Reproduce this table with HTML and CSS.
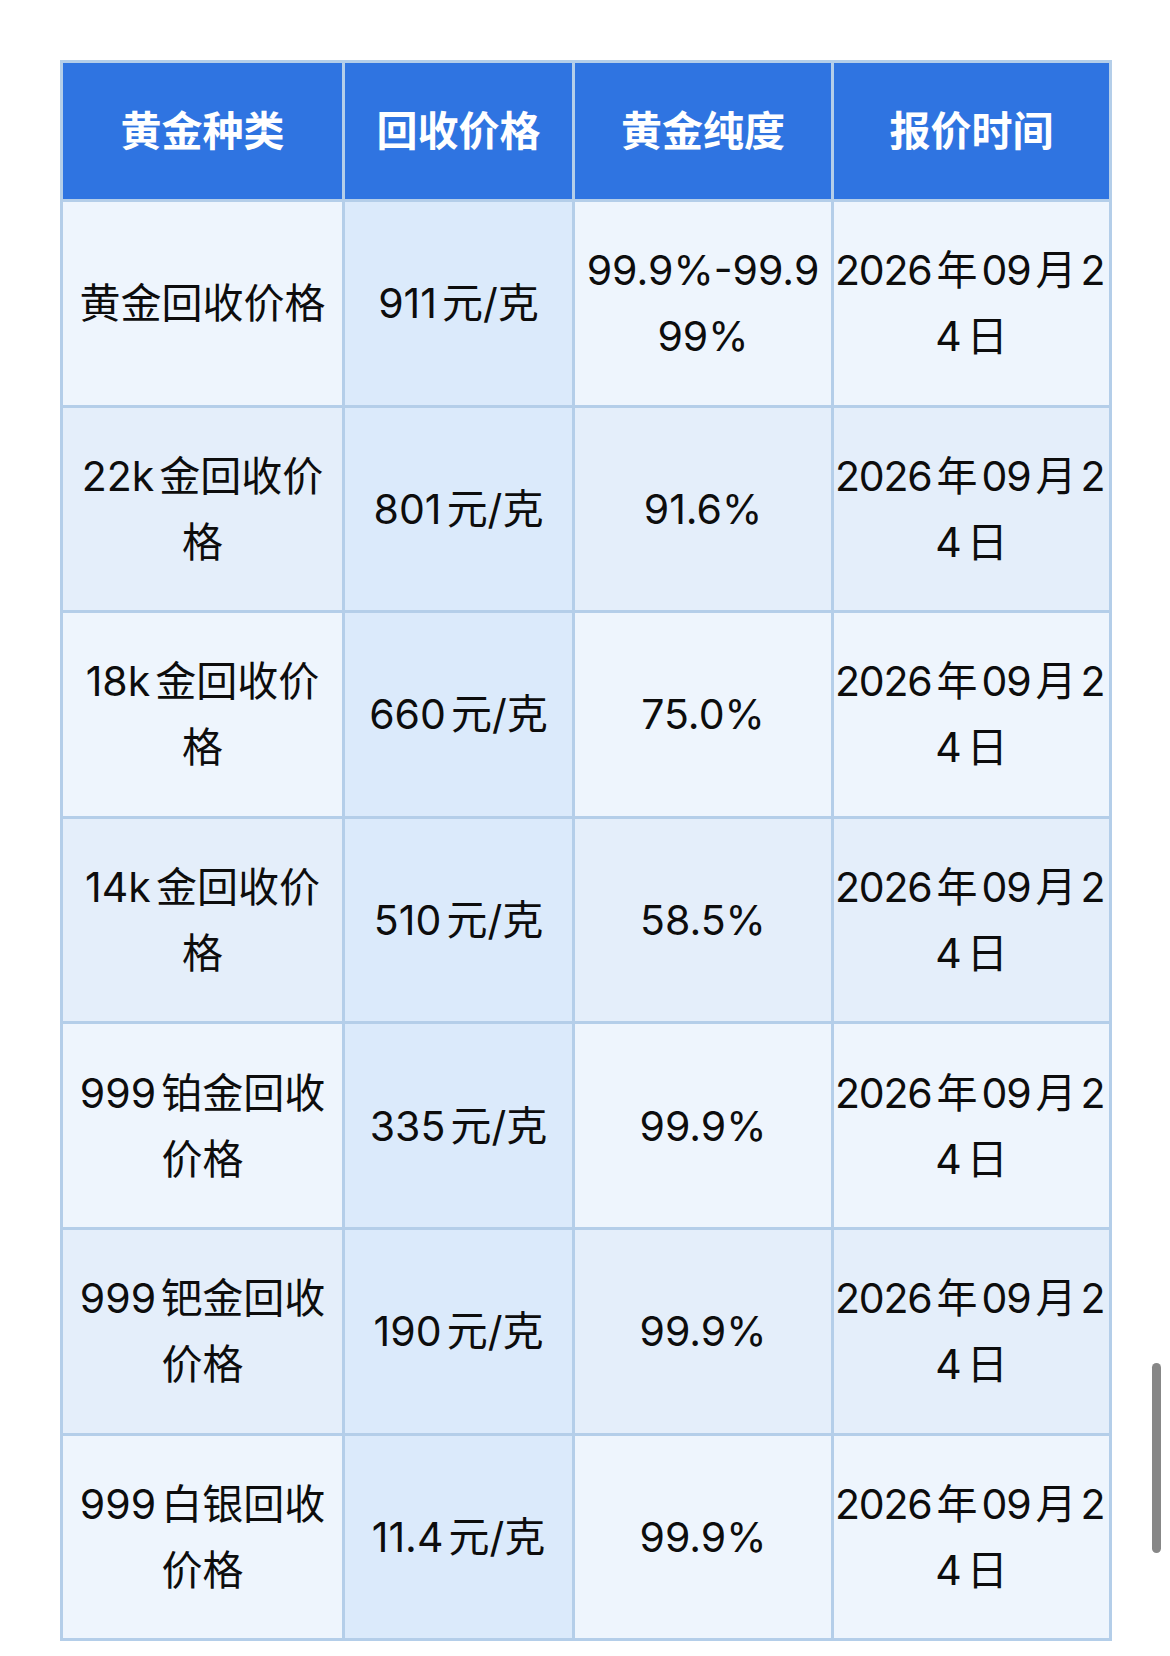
FILE: index.html
```html
<!DOCTYPE html>
<html lang="zh-CN">
<head>
<meta charset="utf-8">
<title>黄金回收价格</title>
<link rel="stylesheet" href="styles.css">
</head>
<body>
<div class="page">
  <table class="price-table">
    <thead>
      <tr>
        <th class="c1">黄金种类</th>
        <th class="c2">回收价格</th>
        <th class="c3">黄金纯度</th>
        <th class="c4">报价时间</th>
      </tr>
    </thead>
    <tbody>
      <tr class="odd">
        <td>黄金回收价格</td>
        <td class="price">911元/克</td>
        <td>99.9%-99.9<br>99%</td>
        <td class="date"><span class="d1">2026年09月2</span><span class="d2">4日</span></td>
      </tr>
      <tr class="even">
        <td>22k金回收价<br>格</td>
        <td class="price">801元/克</td>
        <td>91.6%</td>
        <td class="date"><span class="d1">2026年09月2</span><span class="d2">4日</span></td>
      </tr>
      <tr class="odd">
        <td>18k金回收价<br>格</td>
        <td class="price">660元/克</td>
        <td>75.0%</td>
        <td class="date"><span class="d1">2026年09月2</span><span class="d2">4日</span></td>
      </tr>
      <tr class="even">
        <td>14k金回收价<br>格</td>
        <td class="price">510元/克</td>
        <td>58.5%</td>
        <td class="date"><span class="d1">2026年09月2</span><span class="d2">4日</span></td>
      </tr>
      <tr class="odd">
        <td>999铂金回收<br>价格</td>
        <td class="price">335元/克</td>
        <td>99.9%</td>
        <td class="date"><span class="d1">2026年09月2</span><span class="d2">4日</span></td>
      </tr>
      <tr class="even">
        <td>999钯金回收<br>价格</td>
        <td class="price">190元/克</td>
        <td>99.9%</td>
        <td class="date"><span class="d1">2026年09月2</span><span class="d2">4日</span></td>
      </tr>
      <tr class="odd">
        <td>999白银回收<br>价格</td>
        <td class="price">11.4元/克</td>
        <td>99.9%</td>
        <td class="date"><span class="d1">2026年09月2</span><span class="d2">4日</span></td>
      </tr>
    </tbody>
  </table>
  <div class="scrollbar"></div>
</div>
</body>
</html>
```

FILE: styles.css
```css
html, body {
  margin: 0;
  padding: 0;
  background: #ffffff;
}

.page {
  position: relative;
  width: 1170px;
  height: 1656px;
  overflow: hidden;
  padding: 60px 0 0 60px;
  box-sizing: border-box;
}

.price-table {
  border-collapse: separate;
  border-spacing: 0;
  table-layout: fixed;
  width: 1052px;
  border-left: 3px solid #b4cee9;
  border-top: 3px solid #b4cee9;
  font-family: "Inter", "Noto Sans CJK SC", sans-serif;
  font-size: 41px;
  color: #0d0d0d;
  text-autospace: normal;
}

.price-table th,
.price-table td {
  box-sizing: border-box;
  border-right: 3px solid #b4cee9;
  border-bottom: 3px solid #b4cee9;
  padding: 0;
  text-align: center;
  vertical-align: middle;
  white-space: nowrap;
  overflow: hidden;
  line-height: 66px;
}

.price-table th {
  height: 139px;
  background: #2f74e1;
  color: #ffffff;
  font-weight: 700;
}

.c1 { width: 282px; }
.c2 { width: 230px; }
.c3 { width: 259px; }
.c4 { width: 278px; }

.price-table td {
  height: 205.6px;
  font-weight: 400;
}

.odd td { background: #eef5fd; }
.even td { background: #e4eefa; }
.price-table td.price { background: #dbeafb; }

.price-table td.date {
  padding: 0 1px;
}

.d1 {
  display: block;
  text-align: left;
  letter-spacing: -1.2px;
}

.d2 {
  display: block;
  text-align: center;
}

.scrollbar {
  position: absolute;
  left: 1152px;
  top: 1363px;
  width: 9px;
  height: 190px;
  border-radius: 5px;
  background: #878787;
}
```
